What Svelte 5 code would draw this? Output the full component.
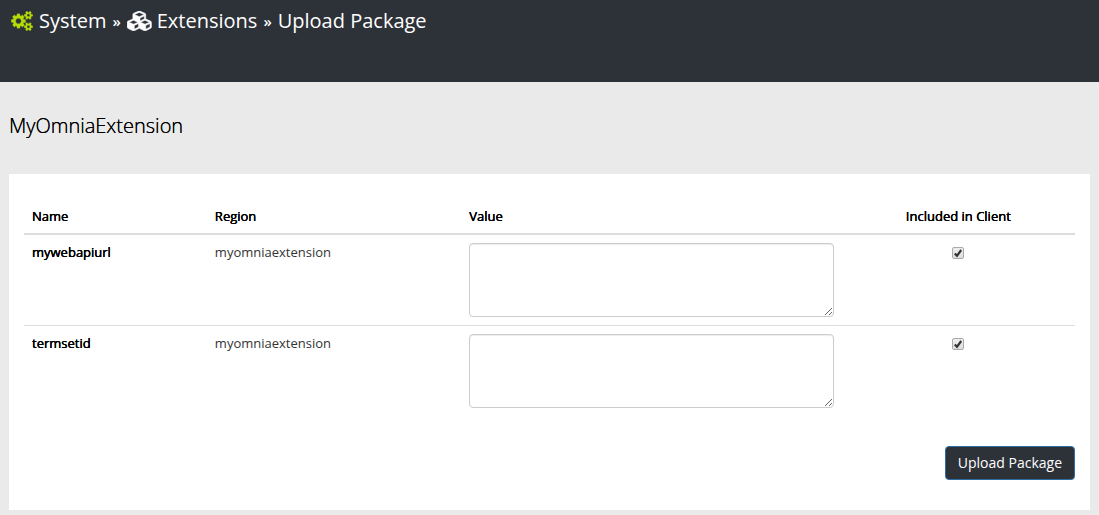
<script>
  let settings = $state([
    { name: 'mywebapiurl', region: 'myomniaextension', value: '', included: true },
    { name: 'termsetid', region: 'myomniaextension', value: '', included: true }
  ]);
</script>

<header>
  <nav aria-label="Breadcrumb">
    <a href="#system">
      <svg class="cogs" viewBox="0 0 1920 1792" aria-hidden="true"><path d="M896 896q0-106-75-181t-181-75-181 75-75 181 75 181 181 75 181-75 75-181zm768 512q0-52-38-90t-90-38-90 38-38 90q0 53 37.5 90.5t90.5 37.5 90.5-37.5 37.5-90.5zm0-1024q0-52-38-90t-90-38-90 38-38 90q0 53 37.5 90.5t90.5 37.5 90.5-37.5 37.5-90.5zm-384 421v185q0 10-7 19.5t-16 10.5l-155 24q-11 35-32 76 34 48 90 115 7 11 7 20 0 12-7 19-23 30-82.5 89.5t-78.5 59.5q-11 0-21-7l-115-90q-37 19-77 31-11 108-23 155-7 24-30 24h-186q-11 0-20-7.5t-10-17.5l-23-153q-34-10-75-31l-118 89q-7 7-20 7-11 0-21-8-144-133-144-160 0-9 7-19 10-14 41-53t47-61q-23-44-35-82l-152-24q-10-1-17-9.5t-7-19.5v-185q0-10 7-19.5t16-10.5l155-24q11-35 32-76-34-48-90-115-7-11-7-20 0-12 7-20 22-30 82-89t79-59q11 0 21 7l115 90q34-18 77-32 11-108 23-154 7-24 30-24h186q11 0 20 7.5t10 17.5l23 153q34 10 75 31l118-89q8-7 20-7 11 0 21 8 144 133 144 160 0 8-7 19-12 16-42 54t-45 60q23 48 34 82l152 23q10 2 17 10.5t7 19.5zm640 533v140q0 16-149 31-12 27-30 52 51 113 51 138 0 4-4 7-122 71-124 71-8 0-46-47t-52-68q-20 2-30 2t-30-2q-14 21-52 68t-46 47q-2 0-124-71-4-3-4-7 0-25 51-138-18-25-30-52-149-15-149-31v-140q0-16 149-31 13-29 30-52-51-113-51-138 0-4 4-7 4-2 35-20t59-34 30-16q8 0 46 46.5t52 67.5q20-2 30-2t30 2q51-71 92-112l6-2q4 0 124 70 4 3 4 7 0 25-51 138 17 23 30 52 149 15 149 31zm0-1024v140q0 16-149 31-12 27-30 52 51 113 51 138 0 4-4 7-122 71-124 71-8 0-46-47t-52-68q-20 2-30 2t-30-2q-14 21-52 68t-46 47q-2 0-124-71-4-3-4-7 0-25 51-138-18-25-30-52-149-15-149-31v-140q0-16 149-31 13-29 30-52-51-113-51-138 0-4 4-7 4-2 35-20t59-34 30-16q8 0 46 46.5t52 67.5q20-2 30-2t30 2q51-71 92-112l6-2q4 0 124 70 4 3 4 7 0 25-51 138 17 23 30 52 149 15 149 31z" /></svg>
      <span>System</span>
    </a>
    <span class="sep">»</span>
    <a class="tight" href="#extensions">
      <svg class="cubes" viewBox="0 0 2304 1792" aria-hidden="true"><path d="M640 1632l384-192v-314l-384 164v342zm-64-454l404-173-404-173-404 173zm1088 454l384-192v-314l-384 164v342zm-64-454l404-173-404-173-404 173zm-448-293l384-165v-266l-384 164v267zm-64-379l441-189-441-189-441 189zm1088 518v416q0 36-19 67t-52 47l-448 224q-25 14-57 14t-57-14l-448-224q-4-2-7-4-2 2-7 4l-448 224q-25 14-57 14t-57-14l-448-224q-33-16-52-47t-19-67v-416q0-38 21.5-70t56.5-48l434-186v-400q0-38 21.5-70t56.5-48l448-192q23-10 50-10t50 10l448 192q35 16 56.5 48t21.5 70v400l434 186q36 16 57 48t21 70z" /></svg>
      <span>Extensions</span>
    </a>
    <span class="sep">»</span>
    <span>Upload Package</span>
  </nav>
</header>

<main>
  <h1>MyOmniaExtension</h1>

  <form class="card" onsubmit={(e) => e.preventDefault()}>
    <table>
      <colgroup>
        <col class="c-name" /><col class="c-region" /><col class="c-value" /><col class="c-client" />
      </colgroup>
      <thead>
        <tr>
          <th scope="col">Name</th>
          <th scope="col">Region</th>
          <th scope="col">Value</th>
          <th scope="col" class="center">Included in Client</th>
        </tr>
      </thead>
      <tbody>
        {#each settings as item (item.name)}
          <tr>
            <th scope="row"><label for={`value-${item.name}`}>{item.name}</label></th>
            <td>{item.region}</td>
            <td><textarea id={`value-${item.name}`} rows="3" bind:value={item.value}></textarea></td>
            <td class="center">
              <label class="tick">
                <input type="checkbox" aria-label="Included in Client" bind:checked={item.included} />
                <svg viewBox="0 0 12 12" aria-hidden="true"><path d="M2.8 6.4L5 8.8L9.2 3" /></svg>
              </label>
            </td>
          </tr>
        {/each}
      </tbody>
    </table>
    <div class="actions">
      <button type="submit">Upload Package</button>
    </div>
  </form>
</main>

<style>
  :global(body) {
    margin: 0;
    background: #eaeaea;
    color: #000;
    font: 13px/18px 'Open Sans', sans-serif;
  }
  header {
    box-sizing: border-box;
    min-height: 82px;
    padding: 7px 11px;
    background: #2d3138;
    color: #fff;
  }
  nav,
  nav a {
    display: flex;
    align-items: center;
    font-size: 20px;
    line-height: 28px;
  }
  nav {
    flex-wrap: wrap;
    gap: 0 6px;
  }
  nav a {
    gap: 6px;
    color: inherit;
    text-decoration: none;
  }
  nav a.tight {
    gap: 4px;
  }
  nav svg {
    height: 20px;
    fill: currentColor;
  }
  .cogs {
    width: 22px;
    color: #b4dc0a;
    stroke: currentColor;
    stroke-width: 30;
  }
  .cubes {
    width: 26px;
    stroke: currentColor;
    stroke-width: 50;
  }
  .sep {
    font-size: 15px;
    font-weight: 600;
  }
  main {
    padding: 30px 9px 5px;
  }
  h1 {
    margin: 0 0 34px;
    font-size: 20px;
    line-height: 28px;
    font-weight: 300;
    text-shadow: 0 0 0 #000;
  }
  .card {
    padding: 25px 15px 30px;
    background: #fff;
  }
  table {
    width: 100%;
    table-layout: fixed;
    border-collapse: separate;
    border-spacing: 0;
  }
  .c-name {
    width: 17.4%;
  }
  .c-region {
    width: 24.2%;
  }
  .c-value {
    width: 36.2%;
  }
  .c-client {
    width: 22.2%;
  }
  th,
  td {
    padding: 8px;
    text-align: left;
    vertical-align: top;
  }
  th {
    font-weight: 400;
    text-shadow: 0 0 0 #000, 0 0 0 #000;
  }
  td {
    color: #333;
  }
  thead th {
    border-bottom: 2px solid #ddd;
  }
  tbody tr + tr > * {
    border-top: 1px solid #ddd;
  }
  th.center,
  td.center {
    text-align: center;
  }
  textarea {
    display: block;
    box-sizing: border-box;
    width: 100%;
    height: 74px;
    padding: 6px 12px;
    border: 1px solid #ccc;
    border-radius: 4px;
    box-shadow: inset 0 1px 1px rgba(0, 0, 0, 0.075);
    font: inherit;
    resize: vertical;
  }
  .tick {
    display: inline-grid;
    margin-top: 4px;
  }
  .tick input,
  .tick svg {
    grid-area: 1 / 1;
    box-sizing: border-box;
    width: 12px;
    height: 12px;
  }
  .tick input {
    appearance: none;
    margin: 0;
    border: 1px solid #aaa;
    border-radius: 2px;
    background: linear-gradient(#eee, #dedede);
  }
  .tick svg {
    fill: none;
    stroke: #333;
    stroke-width: 2.2;
    pointer-events: none;
  }
  .tick input:not(:checked) + svg {
    visibility: hidden;
  }
  .actions {
    display: flex;
    justify-content: flex-end;
    margin-top: 30px;
  }
  button {
    padding: 6px 12px;
    border: 1px solid #2e6da4;
    border-radius: 4px;
    background: #2d3138;
    color: #fff;
    font: 14px/20px 'Open Sans', sans-serif;
    cursor: pointer;
  }
</style>
